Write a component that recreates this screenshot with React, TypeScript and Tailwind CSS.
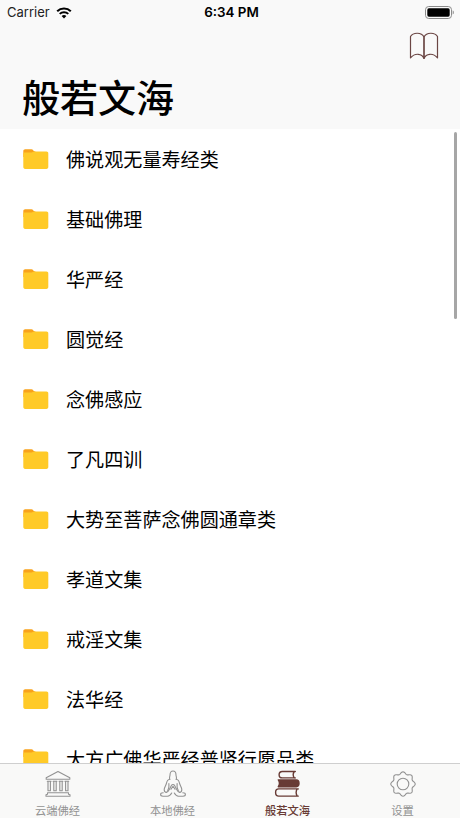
import type { ReactNode } from 'react';

const folders = [
  '佛说观无量寿经类',
  '基础佛理',
  '华严经',
  '圆觉经',
  '念佛感应',
  '了凡四训',
  '大势至菩萨念佛圆通章类',
  '孝道文集',
  '戒淫文集',
  '法华经',
  '大方广佛华严经普贤行愿品类',
];

function WifiIcon() {
  return (
    <svg className="h-[12px] w-[16px]" viewBox="0 0 16 12" fill="none" stroke="#000">
      <path d="M1.2 4.2a9.8 9.8 0 0 1 13.6 0" strokeWidth="2.1" />
      <path d="M3.7 6.9a6.2 6.2 0 0 1 8.6 0" strokeWidth="2" />
      <path d="M8 11.5 5.6 9.1a3.4 3.4 0 0 1 4.8 0Z" fill="#000" stroke="none" />
    </svg>
  );
}

function BatteryIcon() {
  return (
    <svg className="h-[13px] w-[29px]" viewBox="0 0 29 13">
      <rect x="0.5" y="0.5" width="26" height="12" rx="3.2" fill="none" stroke="#8a8a8a" />
      <rect x="2.3" y="2.3" width="22.4" height="8.4" rx="1.6" fill="#000" />
      <path d="M27.7 4.6c.9.3 1.1 1 1.1 1.9s-.2 1.6-1.1 1.9Z" fill="#8a8a8a" />
    </svg>
  );
}

function BookIcon() {
  return (
    <svg
      className="h-[28px] w-[30px]"
      viewBox="0 0 30 28"
      fill="none"
      stroke="#6b4644"
      strokeWidth="1.2"
      strokeLinejoin="round"
    >
      <path d="M15 5v21.5C13 21.5 6 20.5 1.5 25.9V4.5C4 .2 12.5 0 15 5Z" />
      <path d="M15 5v21.5C17 21.5 24 20.5 28.5 25.9V4.5C26 .2 17.5 0 15 5Z" />
    </svg>
  );
}

function FolderIcon() {
  return (
    <svg className="h-[21px] w-[26px]" viewBox="0 0 26 21">
      <path d="M.3 2C.3.9 1.1.2 2.2.2h6.200c1.700 0 2.200 2.400 4 2.400V8H.3Z" fill="#f9a21b" />
      <path d="M.3 5c0-1 .6-1.600 1.600-1.600h6.600c1.100 0 1.600-.8 2.700-.8h12.300c1.100 0 1.800.7 1.800 1.800v13.700c0 1.100-.7 1.800-1.800 1.800H2.100c-1.100 0-1.800-.7-1.800-1.800Z" fill="#ffca28" />
    </svg>
  );
}

function TempleIcon() {
  return (
    <>
      <path d="M14 1.500 25.800 7.700v1.500H2.200V7.700Z" />
      <path d="M3.300 11.300h3.800M4 11.300v9.500h2.400v-9.500M9.100 11.300h3.800M9.800 11.300v9.500h2.400v-9.500M15.100 11.300h3.800M15.800 11.300v9.500h2.400v-9.500M20.900 11.300h3.800M21.600 11.300v9.500H24v-9.500" />
      <path d="M3.500 22.700h21v1.500l1.500.6v1.500H2v-1.500l1.500-.6Z" />
    </>
  );
}

function BuddhaIcon() {
  return (
    <>
      <path d="M10.800 9.200c-.9-1.500.2-2.500.2-4.200C11 2.500 12.200 1 14 1s3 1.500 3 4c0 1.700 1.100 2.700.2 4.200" />
      <path d="M10.800 9.200C8.500 9.500 7.900 11.100 7.500 13.200c-.4 2.200-2.300 3.900-2.300 6.300 0 1.600.5 2.700 2 2.900M17.200 9.200c2.300.3 2.900 1.900 3.300 4 .4 2.200 2.300 3.900 2.300 6.300 0 1.600-.5 2.700-2 2.900" />
      <path d="M9.900 13.500v3.300c0 1.300-.6 2.600-1.200 3.800M18.100 13.500v3.300c0 1.300.6 2.600 1.200 3.800" />
      <path d="M7.200 22.400c1.700 0 2.400-1.300 3.100-2.800l2.100-4.100c.7-1.300 2.500-1.300 3.200 0l2.100 4.100c.7 1.500 1.400 2.800 3.100 2.800M12 19.300l2-3 2 3" />
      <path d="M4.200 22.700c-1.700 0-2.600.7-2.600 1.800s.9 1.700 2.400 1.700h4.500c2.200 0 3.200-1.300 4.200-3.100M23.800 22.700c1.700 0 2.600.7 2.600 1.800s-.9 1.700-2.400 1.700h-4.500c-2.200 0-3.200-1.300-4.200-3.100" />
    </>
  );
}

function BooksIcon() {
  return (
    <>
      <path d="M21.300 1.500H8.300C6.300 1.500 5.100 2.900 5.100 4.700s1.200 3.200 3.200 3.200H21.300M20.300 1.500c-1.400 2-1.400 4.400 0 6.400" />
      <path d="M4.300 9.900h18c1.700 0 2.700 1.400 2.700 3.400s-1 3.400-2.700 3.400h-18c1.500-2.200 1.500-4.600 0-6.800Z" fill="#683b35" />
      <path d="M24.300 18.900H4.700C2.700 18.900 1.600 20.400 1.600 22.400s1.100 3.700 3.100 3.700h19.600M23.200 18.900c-1.300 2.200-1.300 5 0 7.200" />
    </>
  );
}

// eight soft teeth around the hub
const gearPoints = Array.from({ length: 96 }, (_, i) => {
  const angle = (i / 96) * Math.PI * 2;
  const radius = 11.1 + 1.1 * Math.cos(angle * 8);
  return `${(14 + radius * Math.sin(angle)).toFixed(2)},${(14 - radius * Math.cos(angle)).toFixed(2)}`;
}).join(' ');

function GearIcon() {
  return (
    <>
      <polygon points={gearPoints} />
      <circle cx="14" cy="14" r="5.8" />
    </>
  );
}

const tabs: { label: string; icon: ReactNode; active?: boolean }[] = [
  { label: '云端佛经', icon: <TempleIcon /> },
  { label: '本地佛经', icon: <BuddhaIcon /> },
  { label: '般若文海', icon: <BooksIcon />, active: true },
  { label: '设置', icon: <GearIcon /> },
];

export default function App() {
  return (
    <div className="flex h-[818px] w-[460px] flex-col overflow-hidden bg-white font-['Inter','Noto_Sans_CJK_SC',sans-serif] text-black">
      <header className="flex h-[129px] shrink-0 flex-col bg-[#f9f9f9]">
        <div className="grid h-6 grid-cols-3 items-center pl-[7px] pr-[6px]">
          <div className="flex items-center gap-[6px] pt-px text-[13px] text-[#222]">
            <span>Carrier</span>
            <WifiIcon />
          </div>
          <span className="pl-[2px] text-center text-[13.4px] leading-[20px] font-semibold">6:34 PM</span>
          <div className="flex justify-end">
            <BatteryIcon />
          </div>
        </div>
        <div className="flex h-[44px] items-center justify-end pr-[21px]">
          <BookIcon />
        </div>
        <h1 className="pl-[22px] text-[38px] leading-[60px] font-medium">般若文海</h1>
      </header>

      <main className="relative min-h-0 flex-1 overflow-hidden">
        {folders.map((name) => (
          <div key={name} className="flex h-[60px] items-center gap-[17px] pl-[23px]">
            <FolderIcon />
            <span className="pt-px text-[19.1px] leading-[28px] whitespace-nowrap">{name}</span>
          </div>
        ))}
        {/* scroll indicator */}
        <div className="absolute top-[3px] right-[3px] h-[187px] w-[3px] rounded-full bg-[#a6a6a6]" />
      </main>

      <nav className="grid h-[55px] shrink-0 grid-cols-4 border-t border-[#cfcfcf] bg-[#f9f9f8]">
        {tabs.map((tab) => (
          <div
            key={tab.label}
            className={`flex flex-col items-center pt-[6px] ${tab.active ? 'text-[#683b35]' : 'text-[#929292]'}`}
          >
            <svg
              className="h-[28px] w-[28px] shrink-0"
              viewBox="0 0 28 28"
              fill="none"
              stroke="currentColor"
              strokeWidth={tab.active ? 1.4 : 1.1}
              strokeLinecap="round"
              strokeLinejoin="round"
            >
              {tab.icon}
            </svg>
            <span className={`mt-[5px] text-[11.3px] leading-[16px] ${tab.active ? 'font-medium' : ''}`}>
              {tab.label}
            </span>
          </div>
        ))}
      </nav>
    </div>
  );
}
